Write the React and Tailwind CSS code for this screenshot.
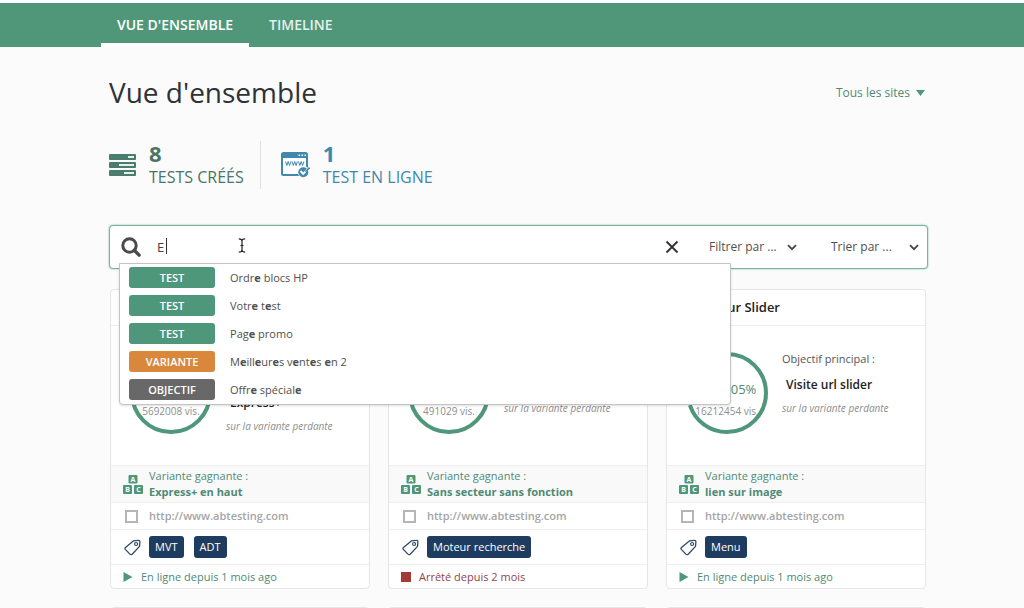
import { useState } from 'react';
import clsx from 'clsx';

const SUGGESTIONS = [
  { type: 'TEST', label: 'Ordre blocs HP' },
  { type: 'TEST', label: 'Votre test' },
  { type: 'TEST', label: 'Page promo' },
  { type: 'VARIANTE', label: 'Meilleures ventes en 2' },
  { type: 'OBJECTIF', label: 'Offre spéciale' },
];

const BADGE_COLORS = {
  TEST: 'bg-[#4f977a]',
  VARIANTE: 'bg-[#d9873b]',
  OBJECTIF: 'bg-[#686868]',
};

const TESTS = [
  {
    id: 1,
    title: 'Express+ en haut',
    rate: '+112.40%',
    progress: 80,
    visitors: '5692008 vis.',
    goal: ['Visite page', 'Express+'],
    winner: 'Express+ en haut',
    tags: ['MVT', 'ADT'],
    running: true,
    status: 'En ligne depuis 1 mois ago',
  },
  {
    id: 2,
    title: 'Moteur de recherche',
    rate: '+104.31%',
    progress: 80,
    visitors: '491029 vis.',
    goal: ['Recherche'],
    winner: 'Sans secteur sans fonction',
    tags: ['Moteur recherche'],
    running: false,
    status: 'Arrêté depuis 2 mois',
  },
  {
    id: 3,
    title: 'Lien sur Slider',
    rate: '+102.05%',
    progress: 70,
    visitors: '16212454 vis.',
    goal: ['Visite url slider'],
    winner: 'lien sur image',
    tags: ['Menu'],
    running: true,
    status: 'En ligne depuis 1 mois ago',
  },
];

function ServerIcon() {
  return (
    <svg width="27" height="22" viewBox="0 0 27 22" aria-hidden="true">
      <g fill="#4a7d6e">
        <rect width="27" height="6" rx="1" />
        <rect y="8" width="27" height="6" rx="1" />
        <rect y="16" width="27" height="6" rx="1" />
      </g>
      <g fill="#e6efec">
        <rect x="19" y="2" width="6" height="2" />
        <rect x="10" y="10" width="15" height="2" />
        <rect x="15" y="18" width="10" height="2" />
      </g>
    </svg>
  );
}

function BrowserIcon() {
  return (
    <svg width="29" height="26" viewBox="0 0 29 26" aria-hidden="true">
      <rect x="1" y="1" width="25" height="22" rx="1.5" fill="#fff" stroke="#4089ad" strokeWidth="2" />
      <path d="M1 1h25v5H1z" fill="#4089ad" />
      <path d="M17.5 3.3h1.6M20.5 3.3h1.6M23.5 3.3h1.6" stroke="#fff" strokeWidth="1.5" />
      <path
        d="M4.5 9.5l1.3 4 1.4-4 1.4 4 1.3-4M11 9.5l1.3 4 1.4-4 1.4 4 1.3-4M17.5 9.5l1.3 4 1.4-4 1.4 4 1.3-4"
        fill="none"
        stroke="#4089ad"
        strokeWidth="1"
      />
      <circle cx="22.5" cy="20" r="6" fill="#fbfbfb" />
      <circle cx="22.3" cy="20.2" r="5" fill="#4089ad" />
      <path d="M19.5 19l2.7 2.9 5.8-6" fill="none" stroke="#fff" strokeWidth="2" />
      <path d="M24.5 19.8l4-4.2" fill="none" stroke="#4089ad" strokeWidth="1.6" />
    </svg>
  );
}

function BlocksIcon() {
  return (
    <svg className="shrink-0" width="20" height="19" viewBox="0 0 20 19" aria-hidden="true">
      <g fill="#4f977a">
        <rect x="5.5" width="9" height="8.5" rx="1" />
        <rect y="10" width="9" height="9" rx="1" />
        <rect x="11" y="10" width="9" height="9" rx="1" />
      </g>
      <g fill="#fff" fontFamily="Open Sans, sans-serif" fontSize="7" fontWeight="700" textAnchor="middle">
        <text x="10" y="7">A</text>
        <text x="4.5" y="17">B</text>
        <text x="15.5" y="17">C</text>
      </g>
    </svg>
  );
}

function TagIcon() {
  return (
    <svg className="shrink-0" width="17" height="17" viewBox="0 0 17 17" fill="none" stroke="#2c4a6b" aria-hidden="true">
      <path
        d="M9.3 1.9L14.4 1.4Q15.9 1.3 15.9 2.8L15.5 7.4L8.2 15.2Q7 16.2 5.9 15.1L1.3 10.4Q.5 9.4 1.5 8.4Z"
        strokeWidth="1.3"
        strokeLinejoin="round"
      />
      <circle cx="12.1" cy="5" r="1.5" strokeWidth="1.2" />
    </svg>
  );
}

function Chevron() {
  return (
    <svg
      className="pointer-events-none col-start-1 row-start-1 self-center justify-self-end"
      width="10"
      height="7"
      viewBox="0 0 10 7"
      aria-hidden="true"
    >
      <path d="M1 1.2l4 4 4-4" fill="none" stroke="#444" strokeWidth="1.8" />
    </svg>
  );
}

function FilterSelect({ label, className }) {
  return (
    <div className={clsx('grid w-[88px]', className)}>
      <select
        aria-label={label}
        className="col-start-1 row-start-1 appearance-none bg-transparent text-xs leading-5 text-[#505050] focus:outline-none"
      >
        <option>{label}</option>
      </select>
      <Chevron />
    </div>
  );
}

function Highlight({ text, query }) {
  return text.split('').map((char, i) =>
    char.toLowerCase() === query.toLowerCase() ? (
      <strong key={i} className="font-bold">{char}</strong>
    ) : (
      char
    )
  );
}

function SearchBar() {
  const [query, setQuery] = useState('E');

  return (
    <div className="relative mt-9 flex h-11 items-center rounded border border-[#78b59d] bg-white pr-2 pl-[11px] shadow-[0_0_2px_#78b59d]">
      <svg className="shrink-0" width="20" height="20" viewBox="0 0 20 20" fill="none" stroke="#4a4a4a" aria-hidden="true">
        <circle cx="8.5" cy="8.5" r="6.7" strokeWidth="3" />
        <path d="M13.3 13.3l4.8 4.8" strokeWidth="3.4" strokeLinecap="round" />
      </svg>
      <input
        type="text"
        aria-label="Rechercher"
        value={query}
        onChange={(e) => setQuery(e.target.value)}
        className="ml-4 h-8 min-w-0 flex-1 text-[13px] text-[#444] caret-transparent focus:outline-none"
      />
      <span className="absolute top-3 left-14 h-4 w-px bg-[#333]" />
      <svg className="absolute top-3 left-32" width="8" height="15" viewBox="0 0 8 15" fill="none" stroke="#222" aria-hidden="true">
        <path d="M.8.8Q4 .8 4 3V12Q4 14.2.8 14.2M7.2.8Q4 .8 4 3V12Q4 14.2 7.2 14.2M2.5 7.5h3" strokeWidth="1.2" />
      </svg>
      <button type="button" aria-label="Effacer" onClick={() => setQuery('')} className="mr-[30px]">
        <svg width="14" height="14" viewBox="0 0 14 14" stroke="#333" strokeWidth="1.9" aria-hidden="true">
          <path d="M1.5 1.5l11 11M12.5 1.5l-11 11" />
        </svg>
      </button>
      <FilterSelect label="Filtrer par ..." className="mr-[34px]" />
      <FilterSelect label="Trier par ..." />

      {query && (
        <ul className="absolute top-[37px] right-[196px] left-[9px] z-10 rounded-b border border-[#c4c4c4] bg-white px-[9px] pt-[3px] pb-1 shadow-sm">
          {SUGGESTIONS.map((item) => (
            <li key={item.label} className="mb-[7px] flex items-center last:mb-0">
              <span
                className={clsx(
                  'mr-[15px] w-[86px] rounded-[3px] text-center text-[11px] leading-[21px] font-semibold text-white',
                  BADGE_COLORS[item.type]
                )}
              >
                {item.type}
              </span>
              <span className="text-[11px] leading-[21px] text-[#505050]">
                <Highlight text={item.label} query={query} />
              </span>
            </li>
          ))}
        </ul>
      )}
    </div>
  );
}

function Gauge({ rate, progress, visitors }) {
  return (
    <div className="grid h-[84px] w-[84px] shrink-0 place-items-center">
      <svg className="col-start-1 row-start-1" width="84" height="84" viewBox="0 0 84 84" aria-hidden="true">
        <circle
          cx="42"
          cy="42"
          r="39"
          fill="none"
          stroke="#4f977a"
          strokeWidth="4"
          pathLength="100"
          strokeDasharray={`${progress} 100`}
          transform="rotate(-90 42 42)"
        />
      </svg>
      <div className="col-start-1 row-start-1 pt-3 text-center whitespace-nowrap">
        <p className="text-[13px] leading-6 text-[#4f8a74]">{rate}</p>
        <p className="text-[10px] leading-5 text-[#8e8e8e]">{visitors}</p>
      </div>
    </div>
  );
}

function TestCard({ test }) {
  return (
    <article className="rounded-sm border border-[#e6e6e6] bg-white">
      <h2 className="border-b border-[#eee] px-6 text-[13px] leading-[35px] font-semibold text-[#222]">{test.title}</h2>

      <div className="flex h-[139px] pt-[25px] pl-[18px]">
        <Gauge rate={test.rate} progress={test.progress} visitors={test.visitors} />
        <div className="pl-[13px] text-[11px] leading-4 text-[#555]">
          <p>Objectif principal :</p>
          <p className="mt-[9px] mb-1.5 pl-1 text-xs leading-[18px] font-semibold text-[#222]">
            {test.goal.map((line) => (
              <span key={line} className="block">{line}</span>
            ))}
          </p>
          <p className="text-[10px] text-[#8e8e8e] italic">sur la variante perdante</p>
        </div>
      </div>

      <div className="flex h-[38px] items-center gap-1.5 border-y border-[#efefef] bg-[#f9f9f9] pl-3 text-[11px] leading-4 text-[#4f8a74]">
        <BlocksIcon />
        <p>
          <span className="block">Variante gagnante :</span>
          <strong className="font-bold">{test.winner}</strong>
        </p>
      </div>

      <div className="flex h-[27px] items-center border-b border-[#efefef] pl-[14px]">
        <input
          type="checkbox"
          aria-label="Sélectionner http://www.abtesting.com"
          className="h-[13px] w-[13px] shrink-0 appearance-none border-2 border-[#b5b5b5]"
        />
        <a href="#site" className="ml-[11px] text-[11px] leading-4 font-semibold text-[#a5a5a5]">
          http://www.abtesting.com
        </a>
      </div>

      <div className="flex h-[35px] items-center border-b border-[#efefef] pl-[13px]">
        <TagIcon />
        <ul className="ml-2 flex gap-2.5">
          {test.tags.map((tag) => (
            <li key={tag} className="rounded-[3px] bg-[#1d3c60] px-1.5 text-[11px] leading-[22px] font-medium text-white">
              {tag}
            </li>
          ))}
        </ul>
      </div>

      <div
        className={clsx(
          'flex h-[23px] items-center gap-2 pl-3 text-[11px] leading-4',
          test.running ? 'text-[#4f8a74]' : 'text-[#96434a]'
        )}
      >
        {test.running ? (
          <svg width="10" height="10" viewBox="0 0 10 10" aria-hidden="true">
            <path d="M.5 0v10L9.5 5z" fill="#4f977a" />
          </svg>
        ) : (
          <span className="h-2.5 w-2.5 bg-[#a33a35]" />
        )}
        {test.status}
      </div>
    </article>
  );
}

function App() {
  return (
    <div className="h-screen overflow-hidden bg-[#fbfbfb] font-['Open_Sans',sans-serif] text-[#333]">
      <nav className="flex h-[47px] border-t-[3px] border-white bg-[#50977a] pl-[101px] text-sm font-semibold text-white">
        <a href="#overview" className="border-b-4 border-white px-4 leading-[44px]">VUE D'ENSEMBLE</a>
        <a href="#timeline" className="px-5 leading-[44px] text-[#e3f0ea]">TIMELINE</a>
      </nav>

      <main className="pt-[23px] pr-24 pl-[109px]">
        <header className="flex items-center justify-between">
          <h1 className="text-[28px] leading-[44px] text-[#2f3236]">Vue d'ensemble</h1>
          <button type="button" className="flex items-center gap-1.5 pt-0.5 pr-[3px] text-xs leading-5 text-[#4f8a74]">
            Tous les sites
            <svg width="9" height="6" viewBox="0 0 9 6" aria-hidden="true">
              <path d="M0 0h9L4.5 6z" fill="#4f977a" />
            </svg>
          </button>
        </header>

        {/* Counters */}
        <section className="mt-[27px] flex">
          <div className="flex items-center gap-[13px] border-r border-[#e0e0e0] pr-4 text-[#4a7468]">
            <ServerIcon />
            <p className="text-base leading-6">
              <strong className="block text-[22px] leading-6 font-bold">8</strong>
              TESTS CRÉÉS
            </p>
          </div>
          <div className="flex items-center gap-[13px] pl-5 text-[#4089ad]">
            <BrowserIcon />
            <p className="text-base leading-6">
              <strong className="block text-[22px] leading-6 font-bold">1</strong>
              TEST EN LIGNE
            </p>
          </div>
        </section>

        <SearchBar />

        {/* Test cards */}
        <section className="mt-5 grid grid-cols-3 gap-[18px] pr-0.5 pl-px">
          {TESTS.map((test) => (
            <TestCard key={test.id} test={test} />
          ))}
          {TESTS.map((test) => (
            <div key={test.id} className="h-72 rounded-sm border border-[#e6e6e6] bg-white" />
          ))}
        </section>
      </main>
    </div>
  );
}

export default App;
